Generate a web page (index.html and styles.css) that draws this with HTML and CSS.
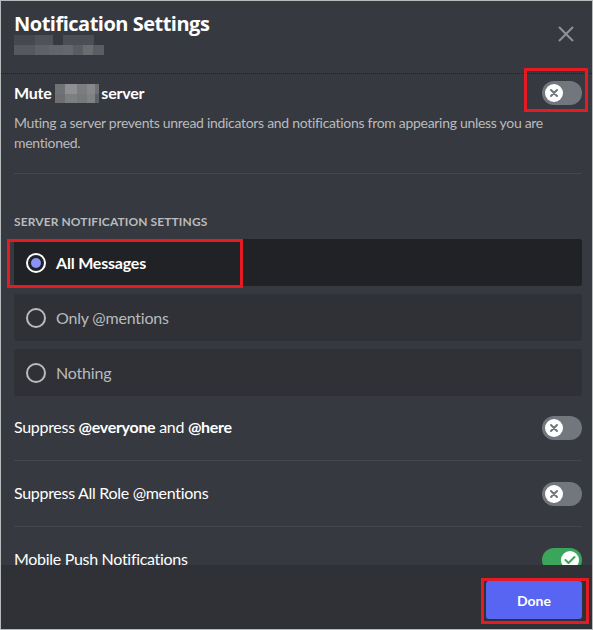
FILE: index.html
```html
<!DOCTYPE html>
<html lang="en">
<head>
<meta charset="utf-8">
<title>Notification Settings</title>
<link rel="stylesheet" href="styles.css">
</head>
<body>
<div class="modal">
  <header class="header">
    <div class="header-text">
      <h1 class="title">Notification Settings</h1>
      <div class="server-blur">
        <div class="blur-row blur-row-top"></div>
        <div class="blur-row blur-row-bottom"></div>
      </div>
    </div>
    <button class="close" aria-label="Close">
      <svg width="16" height="16" viewBox="0 0 16 16"><path d="M1 1 L15 15 M15 1 L1 15" stroke="currentColor" stroke-width="2" fill="none"/></svg>
    </button>
  </header>

  <div class="content">
    <div class="switch-row mute-row">
      <div class="mute-label">Mute <span class="name-blur"></span>server</div>
      <span class="toggle off"><span class="knob"><svg width="10" height="10" viewBox="0 0 10 10"><path d="M2 2 L8 8 M8 2 L2 8" stroke="currentColor" stroke-width="2" fill="none" stroke-linecap="round"/></svg></span></span>
    </div>
    <p class="mute-desc">Muting a server prevents unread indicators and notifications from appearing unless you are mentioned.</p>
    <div class="divider"></div>

    <h2 class="section-title">Server Notification Settings</h2>
    <div class="radio-group">
      <div class="radio-item selected">
        <svg class="radio" width="20" height="20" viewBox="0 0 20 20"><circle cx="10" cy="10" r="9" fill="none" stroke="#ffffff" stroke-width="2"/><circle cx="10" cy="10" r="5" fill="#8a92f6"/></svg>
        <span class="radio-label">All Messages</span>
      </div>
      <div class="radio-item">
        <svg class="radio" width="20" height="20" viewBox="0 0 20 20"><circle cx="10" cy="10" r="9" fill="none" stroke="#b9bbbe" stroke-width="2"/></svg>
        <span class="radio-label">Only @mentions</span>
      </div>
      <div class="radio-item">
        <svg class="radio" width="20" height="20" viewBox="0 0 20 20"><circle cx="10" cy="10" r="9" fill="none" stroke="#b9bbbe" stroke-width="2"/></svg>
        <span class="radio-label">Nothing</span>
      </div>
    </div>

    <div class="switch-item">
      <div class="switch-row">
        <span class="switch-label">Suppress <b>@everyone</b> and <b>@here</b></span>
        <span class="toggle off"><span class="knob"><svg width="10" height="10" viewBox="0 0 10 10"><path d="M2 2 L8 8 M8 2 L2 8" stroke="currentColor" stroke-width="2" fill="none" stroke-linecap="round"/></svg></span></span>
      </div>
      <div class="divider switch-divider"></div>
    </div>
    <div class="switch-item">
      <div class="switch-row">
        <span class="switch-label">Suppress All Role @mentions</span>
        <span class="toggle off"><span class="knob"><svg width="10" height="10" viewBox="0 0 10 10"><path d="M2 2 L8 8 M8 2 L2 8" stroke="currentColor" stroke-width="2" fill="none" stroke-linecap="round"/></svg></span></span>
      </div>
      <div class="divider switch-divider"></div>
    </div>
    <div class="switch-item">
      <div class="switch-row">
        <span class="switch-label">Mobile Push Notifications</span>
        <span class="toggle on"><span class="knob"><svg width="12" height="10" viewBox="0 0 12 10"><path d="M1.5 5 L4.5 8 L10.5 2" stroke="currentColor" stroke-width="2" fill="none" stroke-linecap="round" stroke-linejoin="round"/></svg></span></span>
      </div>
      <div class="divider switch-divider"></div>
    </div>
  </div>

  <footer class="footer">
    <button class="done">Done</button>
  </footer>

  <div class="highlight hl-mute"></div>
  <div class="highlight hl-all"></div>
  <div class="highlight hl-done"></div>
</div>
</body>
</html>
```

FILE: styles.css
```css
* { box-sizing: border-box; }

html, body {
  margin: 0;
  padding: 0;
  background: #36393f;
}

.modal {
  position: relative;
  width: 593px;
  height: 630px;
  border: 1px solid #b6babb;
  background: #36393f;
  display: flex;
  flex-direction: column;
  overflow: hidden;
  font-family: Lato, "Open Sans", sans-serif;
}

/* header */
.header {
  display: flex;
  justify-content: space-between;
  align-items: flex-start;
  padding: 11px 14px 18px 13px;
  border-bottom: 1px dotted #1e1f23;
  flex: none;
}

.title {
  margin: 0;
  font-family: "Open Sans", sans-serif;
  font-weight: 700;
  font-size: 20px;
  line-height: 23px;
  color: #ffffff;
  letter-spacing: -0.5px;
}

.server-blur {
  width: 90px;
  height: 20px;
  display: flex;
  flex-direction: column;
}

.blur-row { flex: 1; }

.blur-row-top {
  width: 80px;
  background: linear-gradient(to right,
    #45484d 0 21px, #4f5256 21px 39px, #36393f 39px 49px, #4b4e53 49px 80px);
}

.blur-row-bottom {
  width: 90px;
  background: linear-gradient(to right,
    #55585c 0 21px, #5e6165 21px 35px, #62656a 35px 49px, #64676b 49px 59px,
    #595c60 59px 69px, #6a6d70 69px 79px, #5a5d61 79px 90px);
}

.close {
  margin-top: 10px;
  width: 24px;
  height: 24px;
  padding: 0;
  border: 0;
  background: transparent;
  color: #8f9296;
  display: flex;
  align-items: center;
  justify-content: center;
}

/* content */
.content {
  flex: 1;
  overflow: hidden;
  padding: 0 10px 0 13px;
}

.switch-row {
  display: flex;
  justify-content: space-between;
  align-items: center;
  height: 24px;
}

.mute-row { margin-top: 7px; }

.mute-label {
  font-weight: 700;
  font-size: 16px;
  line-height: 20px;
  color: #ffffff;
  display: flex;
  align-items: center;
  white-space: pre;
  letter-spacing: -0.2px;
}

.name-blur {
  display: inline-block;
  width: 44px;
  height: 19px;
  margin-right: 2px;
  background:
    linear-gradient(to right,
      #707276 0 10px, #8d8f92 10px 22px, #7a7c80 22px 32px, #85878a 32px 40px, #6f7175 40px 44px) top / 100% 10px no-repeat,
    linear-gradient(to right,
      #6c6e72 0 10px, #7c7e82 10px 22px, #76787c 22px 32px, #7f8184 32px 40px, #5d6064 40px 44px) bottom / 100% 9px no-repeat;
}

.mute-desc {
  margin: 8px 0 0;
  font-size: 14px;
  line-height: 20px;
  color: #b9bbbe;
  letter-spacing: -0.3px;
}

.divider {
  height: 1px;
  background: #44474d;
  margin-top: 20px;
}

.section-title {
  margin: 40px 0 0;
  font-size: 12px;
  line-height: 16px;
  font-weight: 700;
  text-transform: uppercase;
  letter-spacing: 0.1px;
  color: #b9bbbe;
}

.radio-group {
  margin-top: 9px;
  display: flex;
  flex-direction: column;
  gap: 8px;
}

.radio-item {
  height: 47px;
  border-radius: 3px;
  background: #2f3136;
  display: flex;
  align-items: center;
  padding: 0 12px;
}

.radio-item.selected { background: #202225; }

.radio { flex: none; }

.radio-label {
  margin-left: 10px;
  font-size: 16px;
  line-height: 20px;
  color: #b9bbbe;
  letter-spacing: -0.2px;
}

.radio-item.selected .radio-label {
  color: #ffffff;
  font-weight: 700;
}

.switch-item { margin-top: 20px; }
.switch-item + .switch-item { margin-top: 21px; }

.switch-label {
  font-size: 16px;
  line-height: 20px;
  padding-bottom: 2px;
  color: #ffffff;
  letter-spacing: -0.3px;
}

.switch-label b { font-weight: 700; }

/* toggle */
.toggle {
  position: relative;
  flex: none;
  width: 40px;
  height: 24px;
  border-radius: 12px;
  background: #72767d;
}

.toggle .knob {
  position: absolute;
  top: 3px;
  left: 3px;
  width: 18px;
  height: 18px;
  border-radius: 50%;
  background: #ffffff;
  color: #72767d;
  display: flex;
  align-items: center;
  justify-content: center;
}

.toggle.on { background: #3ba55c; }
.toggle.on .knob { left: 19px; color: #3ba55c; }

/* footer */
.footer {
  flex: none;
  height: 64px;
  background: #2f3136;
  display: flex;
  justify-content: flex-end;
  align-items: flex-start;
  padding: 16px 10px 0 0;
}

.done {
  width: 96px;
  height: 38px;
  border: 0;
  border-radius: 3px;
  background: #5865f2;
  color: #ffffff;
  font-family: Lato, sans-serif;
  font-size: 14px;
  font-weight: 700;
}

/* annotation highlights */
.highlight {
  position: absolute;
  border: 3px solid #e51b24;
}

.hl-mute { left: 523px; top: 67px; width: 64px; height: 44px; }
.hl-all  { left: 6px;   top: 238px; width: 236px; height: 49px; }
.hl-done { left: 480px; top: 577px; width: 108px; height: 46px; }
```
